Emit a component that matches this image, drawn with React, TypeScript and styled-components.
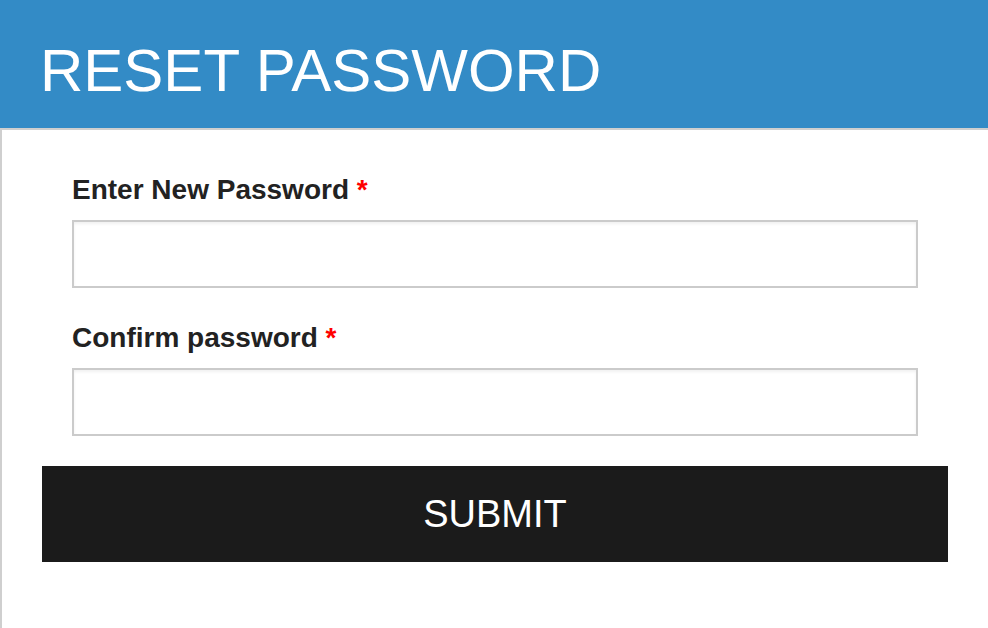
import React from "react";
import styled, { createGlobalStyle } from "styled-components";

const GlobalStyle = createGlobalStyle`
  html, body {
    margin: 0;
    padding: 0;
    background: #fff;
    font-family: "Liberation Sans", Arial, sans-serif;
  }
`;

const Page = styled.div`
  width: 988px;
  height: 628px;
  overflow: hidden;
`;

const Header = styled.div`
  height: 128px;
  background: #338bc6;
  display: flex;
  align-items: center;
  padding: 13px 0 0 40px;
  box-sizing: border-box;
`;

const Title = styled.h1`
  margin: 0;
  color: #fff;
  font-size: 60px;
  font-weight: 400;
  line-height: 1;
`;

const Card = styled.div`
  border-top: 2px solid #cfcfcf;
  border-left: 2px solid #cfcfcf;
  height: 500px;
  box-sizing: border-box;
  padding: 40px 40px 0 40px;
`;

const Field = styled.div`
  display: flex;
  flex-direction: column;
  padding: 0 30px;
  margin-bottom: 30px;
`;

const Label = styled.label`
  font-size: 28px;
  font-weight: 700;
  color: #222;
  line-height: 32px;
  margin: 4px 0 14px;
`;

const Required = styled.span`
  color: #f00;
`;

const Input = styled.input`
  height: 68px;
  box-sizing: border-box;
  border: 2px solid #cbcbcb;
  box-shadow: inset 0 2px 3px rgba(0, 0, 0, 0.06);
  font-size: 20px;
  padding: 0 12px;
  outline: none;
`;

const SubmitButton = styled.button`
  display: block;
  width: 100%;
  height: 96px;
  background: #1b1b1b;
  border: none;
  color: #fff;
  font-family: "Liberation Sans", Arial, sans-serif;
  font-size: 38px;
  padding: 0;
  cursor: pointer;
`;

export default function App() {
  return (
    <Page>
      <GlobalStyle />
      <Header>
        <Title>RESET PASSWORD</Title>
      </Header>
      <Card>
        <Field>
          <Label>
            Enter New Password <Required>*</Required>
          </Label>
          <Input type="password" />
        </Field>
        <Field>
          <Label>
            Confirm password <Required>*</Required>
          </Label>
          <Input type="password" />
        </Field>
        <SubmitButton type="button">SUBMIT</SubmitButton>
      </Card>
    </Page>
  );
}
